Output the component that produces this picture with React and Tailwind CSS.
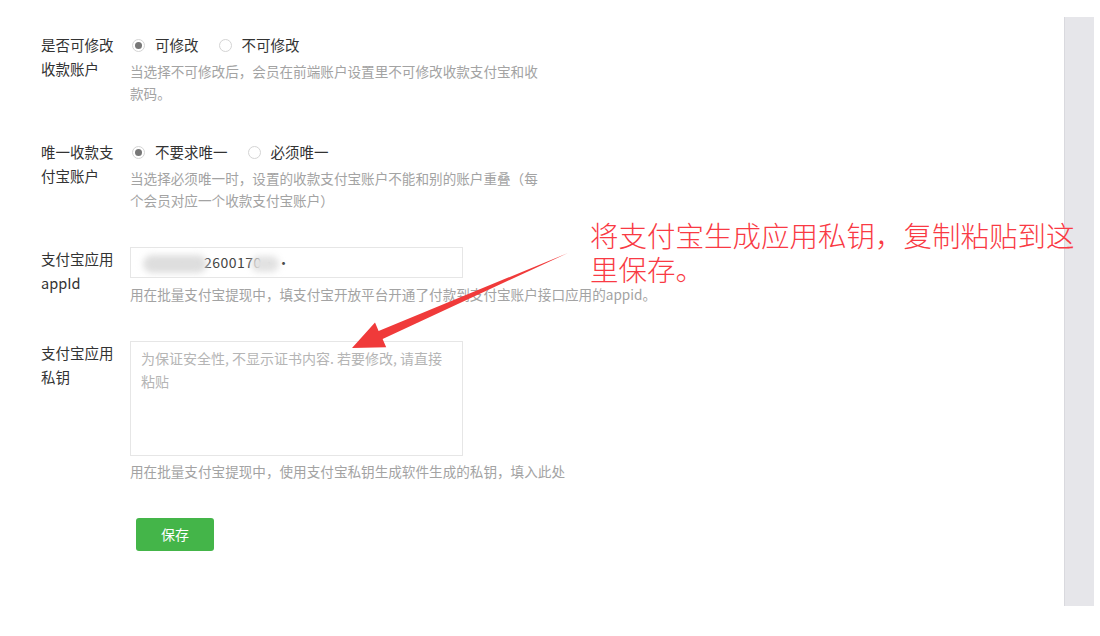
import { useState } from 'react';

const font = { fontFamily: '"Noto Sans CJK SC", "Noto Sans", sans-serif' };

const Radio = ({ checked, label, onClick }) => (
  <label className="flex items-center cursor-pointer mr-[18px]" onClick={onClick}>
    <span className="w-[13px] h-[13px] rounded-full border border-[#d4d4d4] bg-white flex items-center justify-center ml-[2px] mr-[10px]">
      {checked && <span className="w-[7px] h-[7px] rounded-full bg-[#777]"></span>}
    </span>
    <span className="text-[14.5px] text-[#333]">{label}</span>
  </label>
);

const Row = ({ label, children }) => (
  <div className="flex mb-9">
    <div className="w-[130px] pl-[41px] shrink-0">
      <div className="w-[76px] text-[14.5px] leading-[24px] text-[#333]">{label}</div>
    </div>
    <div className="flex-1">{children}</div>
  </div>
);

const Help = ({ children, className = '' }) => (
  <div className={`w-[420px] text-[13.6px] leading-[22px] text-[#a3a3a3] ${className}`}>{children}</div>
);

export default function App() {
  const [editable, setEditable] = useState(true);
  const [unique, setUnique] = useState(false);

  return (
    <div className="w-[1100px] h-[636px] bg-white flex relative overflow-hidden" style={font}>
      <div className="flex-1 pt-[33px]">
        <Row label="是否可修改收款账户">
          <div className="flex items-center h-[24px]">
            <Radio checked={editable} label="可修改" onClick={() => setEditable(true)} />
            <Radio checked={!editable} label="不可修改" onClick={() => setEditable(false)} />
          </div>
          <Help className="mt-[3px]">当选择不可修改后，会员在前端账户设置里不可修改收款支付宝和收款码。</Help>
        </Row>

        <Row label="唯一收款支付宝账户">
          <div className="flex items-center h-[24px]">
            <Radio checked={!unique} label="不要求唯一" onClick={() => setUnique(false)} />
            <Radio checked={unique} label="必须唯一" onClick={() => setUnique(true)} />
          </div>
          <Help className="mt-[3px]">当选择必须唯一时，设置的收款支付宝账户不能和别的账户重叠（每个会员对应一个收款支付宝账户）</Help>
        </Row>

        <Row label={<>支付宝应用<br />appId</>}>
          <div className="relative w-[333px] h-[31px] border border-[#e6e6e6] flex items-center overflow-hidden">
            <span className="ml-[44px] text-[14px] text-[#444] tracking-[0.5px]">··2600170··</span>
            <span className="absolute left-[12px] top-[7px] w-[64px] h-[18px] bg-[#dedede] blur-[3px] rounded-full"></span>
            <span className="absolute left-[120px] top-[8px] w-[28px] h-[16px] bg-[#e2e2e2] blur-[3px] rounded-full"></span>
          </div>
          <Help className="mt-[5px] w-[560px]">用在批量支付宝提现中，填支付宝开放平台开通了付款到支付宝账户接口应用的appid。</Help>
        </Row>

        <Row label={<>支付宝应用<br />私钥</>}>
          <textarea
            className="block w-[333px] h-[115px] border border-[#e6e6e6] px-[10px] py-[5px] text-[14px] leading-[23px] text-[#333] placeholder:text-[#b5b5b5] resize-none outline-none"
            placeholder="为保证安全性, 不显示证书内容. 若要修改, 请直接粘贴"
          ></textarea>
          <Help className="mt-[4px] w-[500px]">用在批量支付宝提现中，使用支付宝私钥生成软件生成的私钥，填入此处</Help>
        </Row>

        <div className="pl-[136px] mt-[2px]">
          <button className="w-[78px] h-[33px] rounded-[3px] bg-[#44b549] text-white text-[14px]">保存</button>
        </div>
      </div>

      <div className="w-[30px] h-[589px] mt-[17px] mr-[6px] bg-[#e6e6ea] border-l border-[#d9d9de]"></div>

      <div className="absolute left-[590px] top-[218px] w-[500px] text-[28.5px] leading-[34px] font-light text-[#f93a44]">
        将支付宝生成应用私钥，复制粘贴到这里保存。
      </div>

      <svg className="absolute left-0 top-0 pointer-events-none" width="1100" height="636">
        <polygon
          points="568,253 382.6,338.9 386.2,347.2 352,348 375,322.6 378.6,330.9"
          fill="#f03a3a"
        />
      </svg>
    </div>
  );
}
